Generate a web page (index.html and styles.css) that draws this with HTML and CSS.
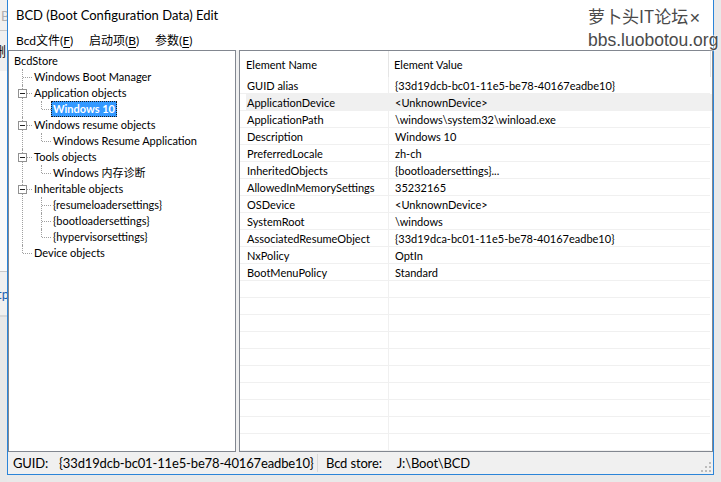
FILE: index.html
```html
<!DOCTYPE html>
<html>
<head>
<meta charset="utf-8">
<link rel="stylesheet" href="styles.css">
</head>
<body>
<div class="desktop">
  <div class="behind">
    <div class="bh-a"><span class="frag fa">B</span></div>
    <div class="bh-b"><span class="frag fb">删</span></div>
    <div class="bh-c"></div>
    <div class="bh-d"><span class="frag fd">tp</span></div>
    <div class="bh-e"></div>
  </div>
  <div class="window">
    <div class="titlebar"><span class="title">BCD (Boot Configuration Data) Edit</span></div>
    <div class="menubar">
      <span class="menu m1">Bcd文件(<u>F</u>)</span>
      <span class="menu m2">启动项(<u>B</u>)</span>
      <span class="menu m3">参数(<u>E</u>)</span>
    </div>
    <div class="client">
      <div class="tree">
        <div class="row"><span class="label">BcdStore</span></div>
        <ul class="lvl lvl1">
          <li><div class="row"><span class="label">Windows Boot Manager</span></div></li>
          <li class="open"><span class="box"></span><div class="row"><span class="label">Application objects</span></div>
            <ul class="lvl">
              <li><div class="row"><span class="label sel">Windows 10</span></div></li>
            </ul>
          </li>
          <li class="open"><span class="box"></span><div class="row"><span class="label">Windows resume objects</span></div>
            <ul class="lvl">
              <li><div class="row"><span class="label">Windows Resume Application</span></div></li>
            </ul>
          </li>
          <li class="open"><span class="box"></span><div class="row"><span class="label">Tools objects</span></div>
            <ul class="lvl">
              <li><div class="row"><span class="label">Windows 内存诊断</span></div></li>
            </ul>
          </li>
          <li class="open"><span class="box"></span><div class="row"><span class="label">Inheritable objects</span></div>
            <ul class="lvl">
              <li><div class="row"><span class="label">{resumeloadersettings}</span></div></li>
              <li><div class="row"><span class="label">{bootloadersettings}</span></div></li>
              <li><div class="row"><span class="label">{hypervisorsettings}</span></div></li>
            </ul>
          </li>
          <li><div class="row"><span class="label">Device objects</span></div></li>
        </ul>
      </div>
      <div class="list">
        <div class="lhead">
          <div class="hc hc1">Element Name</div>
          <div class="hc hc2">Element Value</div>
        </div>
        <div class="lbody">
          <div class="lrow"><div class="c1">GUID alias</div><div class="c2">{33d19dcb-bc01-11e5-be78-40167eadbe10}</div></div>
          <div class="lrow hl"><div class="c1">ApplicationDevice</div><div class="c2">&lt;UnknownDevice&gt;</div></div>
          <div class="lrow"><div class="c1">ApplicationPath</div><div class="c2">\windows\system32\winload.exe</div></div>
          <div class="lrow"><div class="c1">Description</div><div class="c2">Windows 10</div></div>
          <div class="lrow"><div class="c1">PreferredLocale</div><div class="c2">zh-ch</div></div>
          <div class="lrow"><div class="c1">InheritedObjects</div><div class="c2">{bootloadersettings}...</div></div>
          <div class="lrow"><div class="c1">AllowedInMemorySettings</div><div class="c2">35232165</div></div>
          <div class="lrow"><div class="c1">OSDevice</div><div class="c2">&lt;UnknownDevice&gt;</div></div>
          <div class="lrow"><div class="c1">SystemRoot</div><div class="c2">\windows</div></div>
          <div class="lrow"><div class="c1">AssociatedResumeObject</div><div class="c2">{33d19dca-bc01-11e5-be78-40167eadbe10}</div></div>
          <div class="lrow"><div class="c1">NxPolicy</div><div class="c2">OptIn</div></div>
          <div class="lrow"><div class="c1">BootMenuPolicy</div><div class="c2">Standard</div></div>
        </div>
      </div>
    </div>
    <div class="statusbar">
      <div class="sp sp1"><span class="sk">GUID:</span><span>{33d19dcb-bc01-11e5-be78-40167eadbe10}</span></div>
      <div class="sp sp2"><span class="sk2">Bcd store:</span><span>J:\Boot\BCD</span></div>
      <svg class="grip" width="10" height="10" viewBox="0 0 10 10">
        <rect x="8" y="0" width="2" height="2" fill="#bcbcbc"/>
        <rect x="4" y="4" width="2" height="2" fill="#bcbcbc"/>
        <rect x="8" y="4" width="2" height="2" fill="#bcbcbc"/>
        <rect x="0" y="8" width="2" height="2" fill="#bcbcbc"/>
        <rect x="4" y="8" width="2" height="2" fill="#bcbcbc"/>
        <rect x="8" y="8" width="2" height="2" fill="#bcbcbc"/>
      </svg>
    </div>
    <div class="watermark">
      <div class="wm1">萝卜头IT论坛<span class="wx">✕</span></div>
      <div class="wm2">bbs.luobotou.org</div>
    </div>
  </div>
</div>
</body>
</html>
```
FILE: styles.css
```css
* { box-sizing: border-box; }
html, body { margin: 0; padding: 0; }
body {
  width: 721px;
  height: 482px;
  overflow: hidden;
  background: #e9e9e9;
  font-family: "Lato", "Noto Sans CJK SC", sans-serif;
  font-size: 11px;
  color: #000;
}
.desktop { display: flex; width: 721px; height: 482px; }

/* window behind */
.behind { width: 7px; display: flex; flex-direction: column; overflow: hidden; }
.frag { display: block; white-space: nowrap; }
.bh-a { height: 31px; background: #f0f0f0; border-bottom: 1px solid #c8c8c8; }
.fa { color: #b0b0b0; margin: 8px 0 0 1px; font-size: 13px; line-height: 16px; }
.bh-b { height: 40px; background: #f0f0f0; }
.fb { margin: 12px 0 0 -7px; font-size: 13px; line-height: 16px; font-family: "Noto Sans CJK SC", sans-serif; }
.bh-c { height: 201px; background: #fafafa; border-bottom: 1px solid #c8c8c8; }
.bh-d { height: 45px; background: #f0f0f0; border-bottom: 2px solid #d8d8d8; }
.fd { color: #1c5fb0; margin: 14px 0 0 -3px; font-size: 13px; line-height: 16px; }
.bh-e { flex: 1; background: #e8e8e8; }

/* main window */
.window {
  position: relative;
  width: 707px;
  height: 475px;
  border: 1px solid #2b84d8;
  border-top: 0;
  background: #fff;
  display: flex;
  flex-direction: column;
}
.titlebar { height: 30px; line-height: 31px; padding-left: 8px; background: #fff; }
.title { font-size: 13px; }
.menubar { height: 20px; line-height: 21px; display: flex; background: #fff; padding-left: 8px; font-size: 12px; }
.menu { padding: 0; }
.m1 { width: 73px; }
.m2 { width: 66px; }
.menu u { text-decoration: underline; text-underline-offset: 2px; }

.client {
  height: 402px;
  display: flex;
  gap: 3px;
  background: #f0f0f0;
}

/* tree */
.tree {
  width: 228px;
  border: 1px solid #828790;
  background: #fff;
  padding: 2px 0 0 3px;
  overflow: hidden;
}
.row { height: 16px; line-height: 16px; white-space: nowrap; }
.label { display: inline-block; padding: 0 2px; height: 16px; line-height: 16px; }
.label.sel {
  background: #3399ff;
  color: #fff;
  font-weight: bold;
  outline: 1px dotted #1a1a1a;
  outline-offset: -1px;
}
ul.lvl { list-style: none; margin: 0; padding: 0; }
ul.lvl1 { margin-left: 1px; }
ul.lvl li { position: relative; padding-left: 19px; }
ul.lvl li::before {
  content: "";
  position: absolute;
  left: 9px;
  top: 0;
  bottom: 0;
  border-left: 1px dotted #a0a0a0;
}
ul.lvl li:last-child::before { bottom: auto; height: 8px; }
ul.lvl li::after {
  content: "";
  position: absolute;
  left: 10px;
  top: 8px;
  width: 9px;
  border-top: 1px dotted #a0a0a0;
}
.box {
  position: absolute;
  left: 5px;
  top: 4px;
  width: 9px;
  height: 9px;
  background: #fff;
  border: 1px solid #919191;
  z-index: 1;
}
.box::after {
  content: "";
  position: absolute;
  left: 1px;
  top: 3px;
  width: 5px;
  height: 1px;
  background: #222;
}

/* list */
.list {
  flex: 1;
  border: 1px solid #828790;
  background: #fff;
  display: flex;
  flex-direction: column;
}
.lhead { height: 26px; display: flex; }
.hc { line-height: 27px; height: 26px; white-space: nowrap; }
.hc1 { width: 149px; padding-left: 6px; border-right: 1px solid #e5e5e5; }
.hc2 { width: 322px; padding-left: 5px; border-right: 1px solid #e5e5e5; }
.lbody {
  flex: 1;
  background:
    linear-gradient(to right, transparent 148px, #f0f0f0 148px, #f0f0f0 149px, transparent 149px),
    repeating-linear-gradient(to bottom, transparent 0, transparent 16px, #f0f0f0 16px, #f0f0f0 17px);
  background-size: 470px 100%, 470px 100%;
  background-repeat: no-repeat;
}
.lrow { height: 17px; display: flex; line-height: 17px; white-space: nowrap; }
.lrow.hl { background: linear-gradient(to right, transparent 6px, #f0f0f0 6px); }
.c1 { width: 149px; padding-left: 7px; }
.c2 { flex: 1; padding-left: 6px; }

/* status bar */
.statusbar {
  height: 22px;
  background: #f0f0f0;
  display: flex;
  align-items: center;
  font-size: 13px;
  letter-spacing: -0.15px;
  position: relative;
}
.sp { height: 18px; line-height: 19px; white-space: nowrap; }
.sp1 { width: 310px; padding-left: 5px; border-right: 1px solid #dadada; }
.sp2 { padding-left: 8px; }
.sk { margin-right: 11px; }
.sk2 { margin-right: 15px; }
.grip { margin-left: auto; margin-right: 2px; align-self: flex-end; margin-bottom: 2px; }

/* watermark over caption */
.watermark {
  position: absolute;
  left: 580px;
  top: 4px;
  color: #4a4a4a;
  text-shadow: 0 0 2px #fff, 0 0 2px #fff, 0 0 1px #fff;
  line-height: 23px;
  white-space: nowrap;
  letter-spacing: 0;
}
.wm1 { font-size: 17px; font-family: "Noto Sans CJK SC", sans-serif; }
.wx { font-size: 14px; margin-left: 1px; }
.wm2 { font-size: 17.5px; font-family: "Liberation Sans", sans-serif; }
```
